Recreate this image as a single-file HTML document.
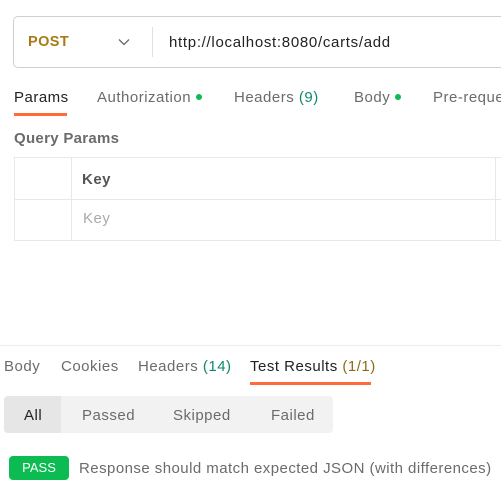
<!DOCTYPE html>
<html><head><style>
*{margin:0;padding:0;box-sizing:border-box}
body{width:501px;height:484px;overflow:hidden;background:#fff;font-family:"Liberation Sans",sans-serif;font-size:15px;letter-spacing:0.5px;color:#6b6b6b;position:relative}
.a{position:absolute;white-space:nowrap}
.dot{display:inline-block;width:6px;height:6px;border-radius:50%;background:#0cbb52;margin-left:5px;vertical-align:2px}
.g{color:#0b8a6e}
</style></head><body>
<div class="a" style="left:13px;top:16px;width:500px;height:52px;border:1px solid #cfcfcf;border-radius:5px"></div>
<div class="a" style="left:28px;top:34px;font-weight:bold;color:#a97a15;font-size:14.5px;letter-spacing:0.4px">POST</div>
<svg class="a" style="left:118px;top:38px" width="12" height="8" viewBox="0 0 12 8"><path d="M1 1.5l5 5 5-5" fill="none" stroke="#666" stroke-width="1.3"/></svg>
<div class="a" style="left:152px;top:27px;width:1px;height:30px;background:#e0e0e0"></div>
<div class="a" style="left:169px;top:34px;color:#222;letter-spacing:0.7px">http://localhost:8080/carts/add</div>

<div class="a" style="left:14px;top:89px;color:#222">Params</div>
<div class="a" style="left:14px;top:113px;width:53px;height:3px;background:#ff6c37"></div>
<div class="a" style="left:97px;top:89px">Authorization<span class="dot"></span></div>
<div class="a" style="left:234px;top:89px">Headers <span class="g">(9)</span></div>
<div class="a" style="left:354px;top:89px">Body<span class="dot"></span></div>
<div class="a" style="left:433px;top:89px">Pre-request</div>

<div class="a" style="left:14px;top:130px;font-weight:bold;color:#6b6b6b;letter-spacing:0.3px">Query Params</div>
<div class="a" style="left:14px;top:157px;width:500px;height:84px;border:1px solid #e8e8e8"></div>
<div class="a" style="left:14px;top:199px;width:500px;height:1px;background:#e8e8e8"></div>
<div class="a" style="left:71px;top:157px;width:1px;height:84px;background:#e8e8e8"></div>
<div class="a" style="left:495px;top:157px;width:1px;height:84px;background:#e8e8e8"></div>
<div class="a" style="left:82px;top:171px;font-weight:bold;color:#555">Key</div>
<div class="a" style="left:83px;top:210px;color:#aaa">Key</div>

<div class="a" style="left:0;top:345px;width:501px;height:1px;background:#ececec"></div>
<div class="a" style="left:4px;top:358px">Body</div>
<div class="a" style="left:61px;top:358px">Cookies</div>
<div class="a" style="left:138px;top:358px">Headers <span class="g">(14)</span></div>
<div class="a" style="left:250px;top:358px;color:#222">Test Results <span style="color:#8a6d1a">(1/1)</span></div>
<div class="a" style="left:250px;top:382px;width:121px;height:3px;background:#ff6c37"></div>

<div class="a" style="left:4px;top:396px;width:329px;height:37px;background:#f2f2f2;border-radius:4px"></div>
<div class="a" style="left:4px;top:396px;width:57px;height:37px;background:#e6e6e6;border-radius:4px 0 0 4px"></div>
<div class="a" style="left:24px;top:407px;color:#222">All</div>
<div class="a" style="left:82px;top:407px">Passed</div>
<div class="a" style="left:173px;top:407px">Skipped</div>
<div class="a" style="left:271px;top:407px">Failed</div>

<div class="a" style="left:9px;top:456px;width:60px;height:24px;background:#0cbb52;border-radius:4px;color:#fff;font-size:13px;letter-spacing:0;text-align:center;line-height:24px">PASS</div>
<div class="a" style="left:79px;top:460px;letter-spacing:0.45px">Response should match expected JSON (with differences)</div>
</body></html>
